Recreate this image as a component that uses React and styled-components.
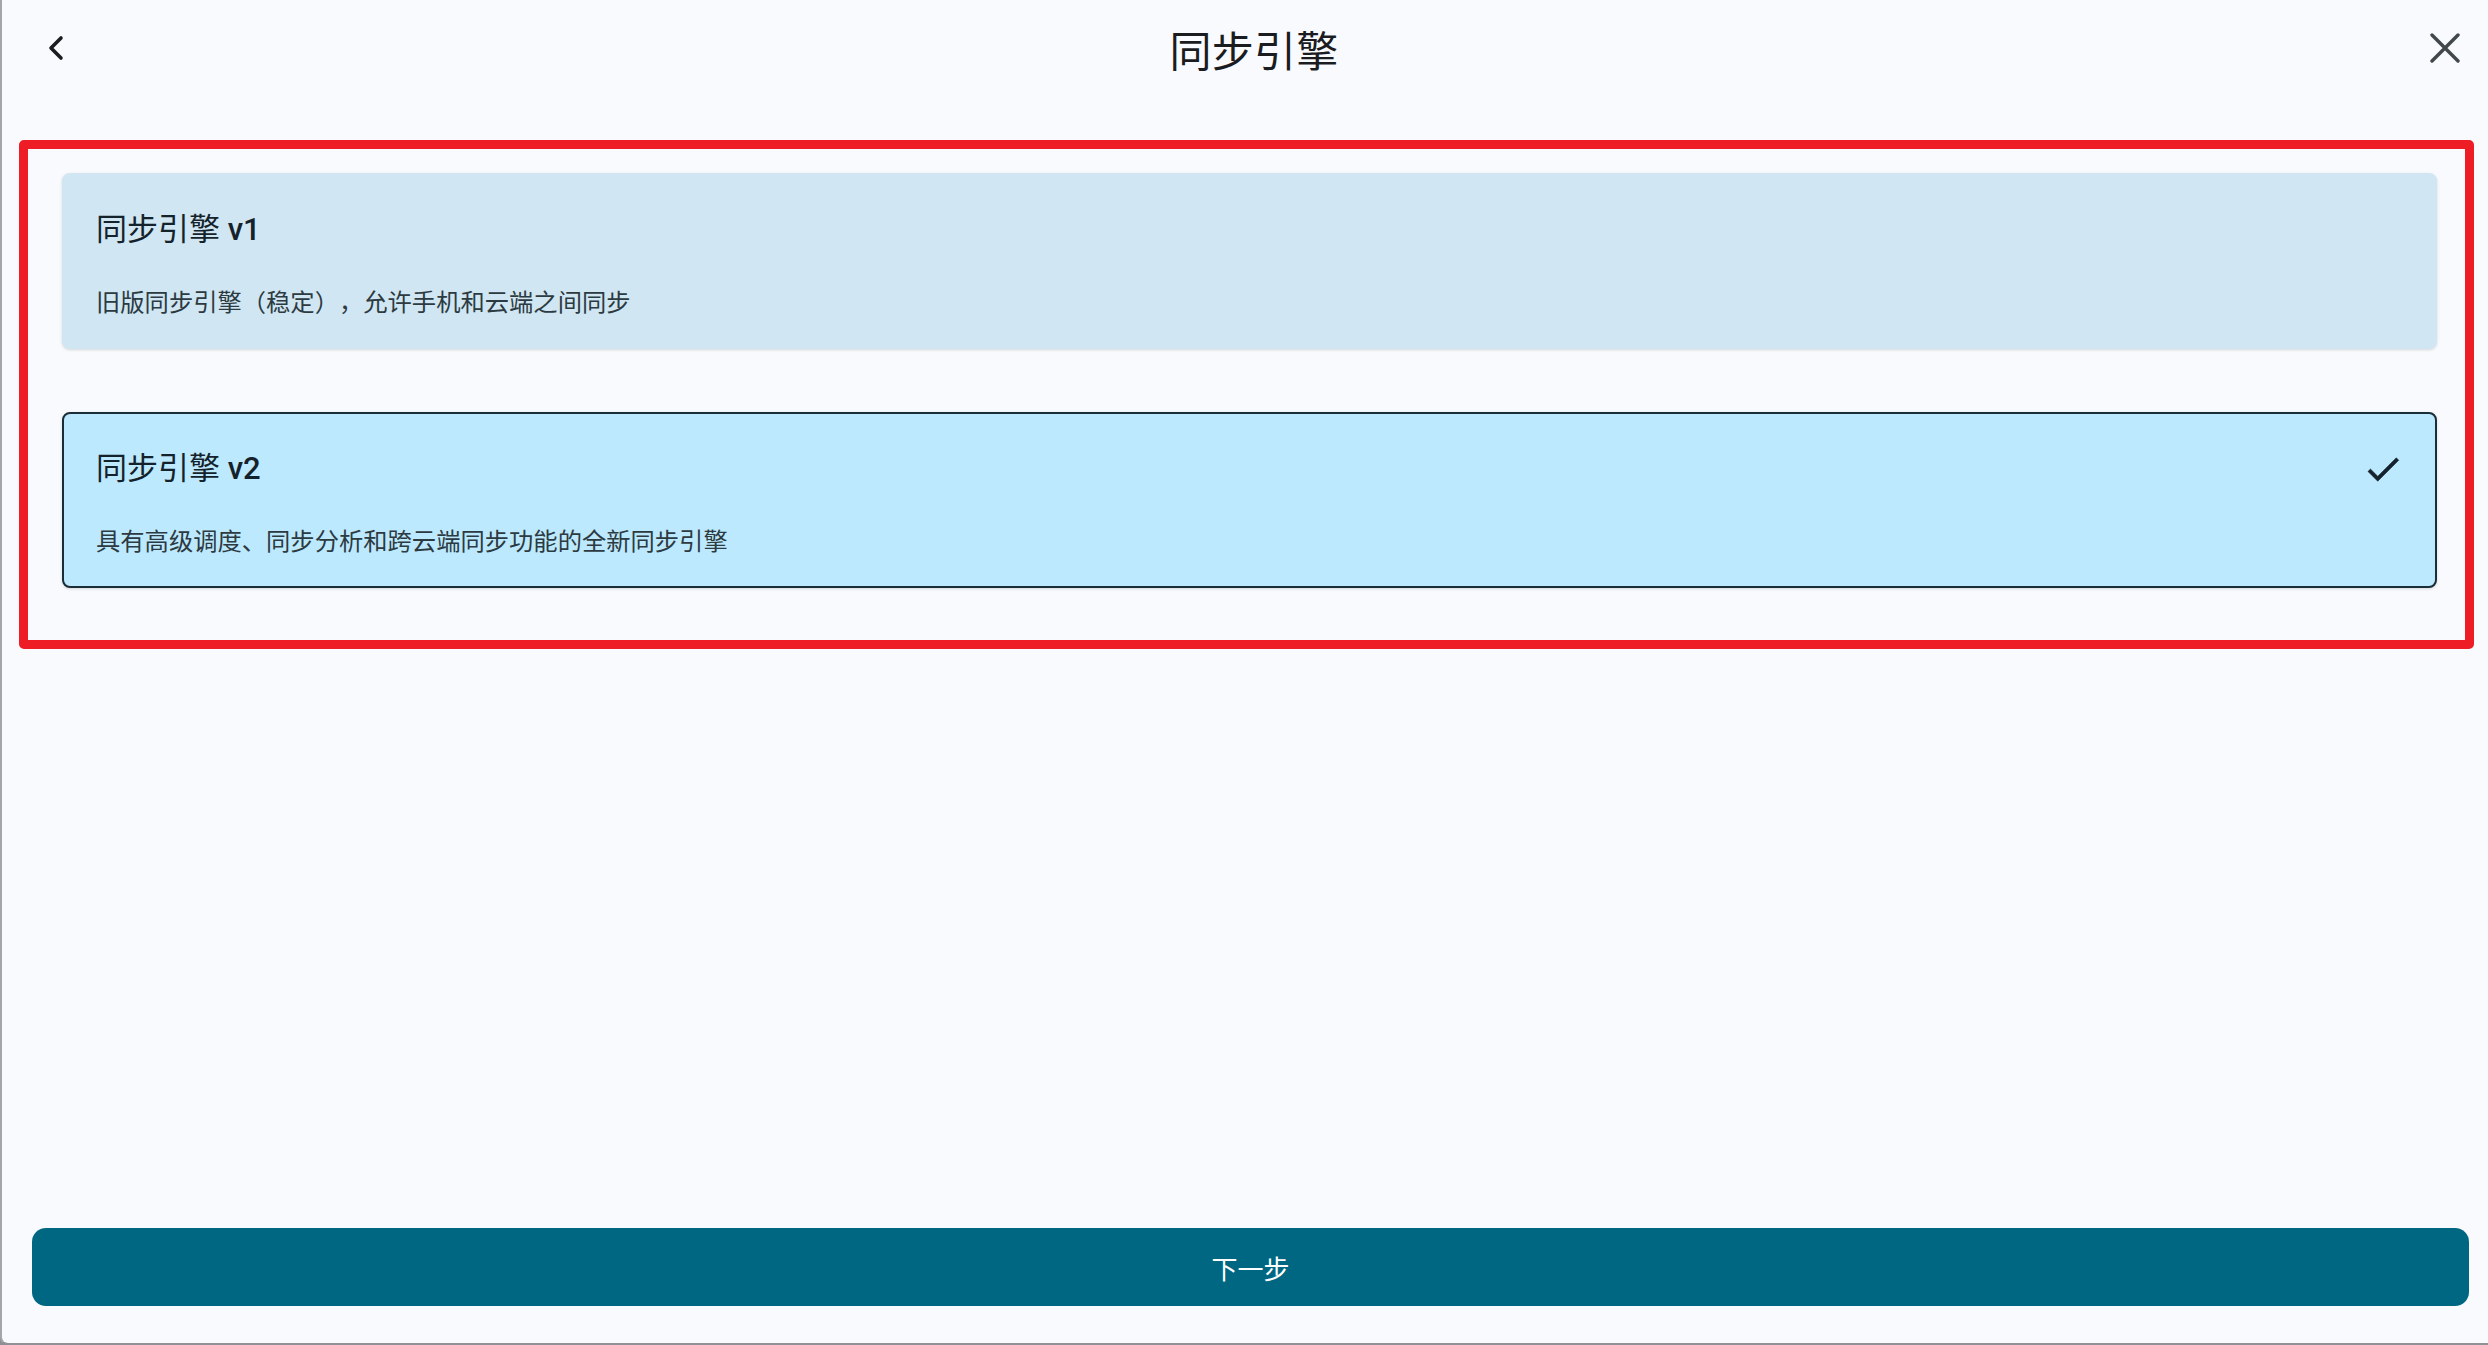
import React from 'react';
import styled, { createGlobalStyle } from 'styled-components';

const GlobalStyle = createGlobalStyle`
  html, body {
    margin: 0;
    padding: 0;
    background: #8d8f93;
  }
  * {
    box-sizing: border-box;
  }
`;

const Window = styled.div`
  position: relative;
  display: flex;
  flex-direction: column;
  width: 2488px;
  height: 1345px;
  background-color: #f9fafd;
  border-left: 2px solid #a3a6aa;
  border-bottom: 2px solid #8f9296;
  border-bottom-left-radius: 8px;
  font-family: Roboto, "Noto Sans CJK SC", sans-serif;
  color: #171d1e;
  text-spacing-trim: space-all;
  overflow: hidden;
`;

const Header = styled.header`
  display: grid;
  grid-template-columns: 1fr auto 1fr;
  align-items: center;
  height: 96px;
  padding: 0 28px 0 46px;
`;

const IconButton = styled.button`
  display: flex;
  align-items: center;
  justify-content: center;
  padding: 0;
  border: none;
  background: none;
  color: ${({ $color }) => $color || '#1b1c1f'};
  justify-self: ${({ $end }) => ($end ? 'end' : 'start')};
  cursor: pointer;
`;

const Title = styled.h1`
  margin: 0;
  font-size: 42px;
  font-weight: 400;
  color: #1b1c1f;
  letter-spacing: 0.3px;
`;

const Content = styled.main`
  flex: 1;
  display: flex;
  flex-direction: column;
  gap: 63px;
  padding: 77px 51px 0 60px;
`;

const Card = styled.div`
  display: flex;
  flex-direction: column;
  gap: 37px;
  padding: 36px 31px 27px 32px;
  border-radius: 8px;
  border: 2px solid ${({ $selected }) => ($selected ? '#1a2e37' : '#d0e6f3')};
  background-color: ${({ $selected }) => ($selected ? '#bde9ff' : '#d0e6f3')};
  box-shadow: 0 1px 3px rgba(0, 0, 0, 0.14);
`;

const CardHead = styled.div`
  display: flex;
  align-items: center;
  justify-content: space-between;
  height: 38px;
`;

const CardTitle = styled.div`
  font-size: 31px;
  line-height: 38px;
  font-weight: 400;
  color: #14232b;

  span {
    font-weight: 500;
  }
`;

const CardDesc = styled.div`
  font-size: 24.3px;
  line-height: 34px;
  color: #2c3a41;
`;

const Footer = styled.footer`
  padding: 0 19px 37px 30px;
`;

const NextButton = styled.button`
  width: 100%;
  height: 78px;
  border: none;
  border-radius: 14px;
  background-color: #006782;
  color: #ffffff;
  font-family: Roboto, "Noto Sans CJK SC", sans-serif;
  font-size: 26px;
  cursor: pointer;
`;

// red annotation frame drawn over the option list
const Highlight = styled.div`
  position: absolute;
  left: 17px;
  top: 140px;
  width: 2455px;
  height: 509px;
  border: 9px solid #ee1c25;
  border-radius: 5px;
  pointer-events: none;
`;

const engines = [
  { id: 'v1', name: '同步引擎', version: 'v1', desc: '旧版同步引擎（稳定），允许手机和云端之间同步' },
  { id: 'v2', name: '同步引擎', version: 'v2', desc: '具有高级调度、同步分析和跨云端同步功能的全新同步引擎' },
];

const App = () => {
  const selected = 'v2';
  return (
    <>
      <GlobalStyle />
      <Window>
        <Header>
          <IconButton aria-label="back">
            <svg width="16" height="26" viewBox="0 0 16 26">
              <polyline points="13,3 3,13 13,23" fill="none" stroke="currentColor" strokeWidth="3.6" strokeLinecap="round" strokeLinejoin="round" />
            </svg>
          </IconButton>
          <Title>同步引擎</Title>
          <IconButton $end $color="#41474b" aria-label="close">
            <svg width="30" height="30" viewBox="0 0 30 30">
              <path d="M2 2 L28 28 M28 2 L2 28" stroke="currentColor" strokeWidth="3.4" strokeLinecap="round" />
            </svg>
          </IconButton>
        </Header>

        <Content>
          {engines.map((e) => (
            <Card key={e.id} $selected={e.id === selected}>
              <CardHead>
                <CardTitle>
                  {e.name} <span>{e.version}</span>
                </CardTitle>
                {e.id === selected && (
                  <svg width="42" height="42" viewBox="0 0 24 24" fill="#14232b" stroke="#14232b" strokeWidth="0.3">
                    <path d="M9 16.17L4.83 12l-1.42 1.41L9 19 21 7l-1.41-1.41z" />
                  </svg>
                )}
              </CardHead>
              <CardDesc>{e.desc}</CardDesc>
            </Card>
          ))}
        </Content>

        <Footer>
          <NextButton>下一步</NextButton>
        </Footer>

        <Highlight />
      </Window>
    </>
  );
};

export default App;
